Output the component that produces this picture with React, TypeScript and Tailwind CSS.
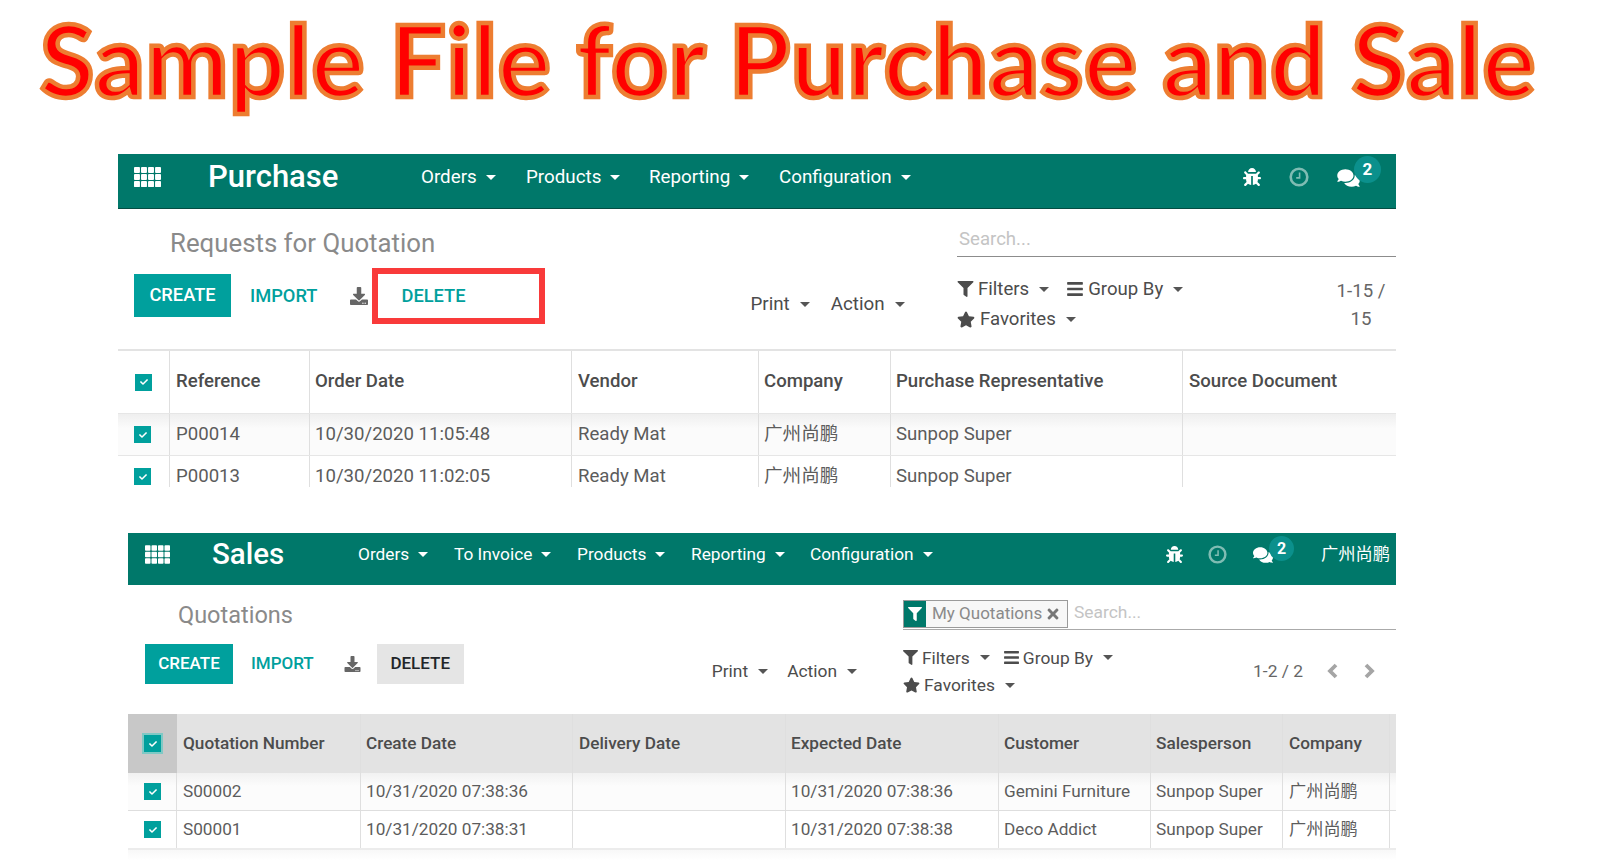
import type { ReactNode } from "react";
import { FaBars, FaBug, FaComments, FaCheck, FaDownload, FaFilter, FaStar, FaTimes } from "react-icons/fa";

const PURCHASE_HEAD = ["Reference", "Order Date", "Vendor", "Company", "Purchase Representative", "Source Document"];
const PURCHASE_ROWS = [
  ["P00014", "10/30/2020 11:05:48", "Ready Mat", "广州尚鹏", "Sunpop Super", ""],
  ["P00013", "10/30/2020 11:02:05", "Ready Mat", "广州尚鹏", "Sunpop Super", ""],
];
const PURCHASE_TIGHT = [1, 3, 4];

const SALES_HEAD = ["Quotation Number", "Create Date", "Delivery Date", "Expected Date", "Customer", "Salesperson", "Company", ""];
const SALES_ROWS = [
  ["S00002", "10/31/2020 07:38:36", "", "10/31/2020 07:38:36", "Gemini Furniture", "Sunpop Super", "广州尚鹏", ""],
  ["S00001", "10/31/2020 07:38:31", "", "10/31/2020 07:38:38", "Deco Addict", "Sunpop Super", "广州尚鹏", ""],
];
const SALES_TIGHT = [1, 3, 4, 5];

function Caret({ className = "" }: { className?: string }) {
  return <span className={`inline-block h-0 w-0 border-x-[5px] border-t-[5px] border-x-transparent border-t-current ${className}`} />;
}

function AppsIcon({ className }: { className: string }) {
  const cells = [];
  for (let r = 0; r < 3; r++) {
    for (let c = 0; c < 4; c++) {
      cells.push(<rect key={`${r}-${c}`} x={c * 6.5} y={r * 6.5} width="5.5" height="5.5" rx="0.8" fill="white" />);
    }
  }
  return <svg viewBox="0 0 25 18.5" className={className}>{cells}</svg>;
}

function ClockIcon({ className }: { className: string }) {
  return (
    <svg viewBox="0 0 20 20" className={className}>
      <circle cx="10" cy="10" r="8.3" fill="none" stroke="#7fbcb3" strokeWidth="2.6" />
      <path d="M10.6 5.5v5.4H7.2" fill="none" stroke="#7fbcb3" strokeWidth="1.6" />
    </svg>
  );
}

function Chevron({ d, className = "" }: { d: string; className?: string }) {
  return (
    <svg viewBox="0 0 12 16" className={`h-[16px] w-[12px] ${className}`}>
      <path d={d} fill="none" stroke="#a5a5a5" strokeWidth="3.8" />
    </svg>
  );
}

function Check({ className = "" }: { className?: string }) {
  return (
    <span className={`flex h-[17px] w-[17px] items-center justify-center bg-[#00a09d] text-white ${className}`}>
      <FaCheck className="h-[8px] w-[8px]" />
    </span>
  );
}

function MenuItem({ label, className }: { label: string; className: string }) {
  return (
    <span className={`flex items-center whitespace-nowrap text-white ${className}`}>
      {label}
      <Caret className="ml-[9px]" />
    </span>
  );
}

function Dropdown({ children, className = "" }: { children: ReactNode; className?: string }) {
  return (
    <span className={`flex items-center whitespace-nowrap font-normal text-[#4c4c4c] ${className}`}>
      {children}
      <Caret className="ml-[10px] text-[#555]" />
    </span>
  );
}

function Cell({ children, tight = false, className = "" }: { children?: ReactNode; tight?: boolean; className?: string }) {
  return (
    <div className={`flex items-center overflow-hidden whitespace-nowrap border-r border-[#dfdfdf] last:border-r-0 ${tight ? "pl-[5px]" : "pl-[6px]"} ${className}`}>
      {children}
    </div>
  );
}

export default function App() {
  return (
    <div className="h-[865px] w-[1600px] overflow-hidden bg-white font-['Roboto','Noto_Sans_CJK_SC',sans-serif]">
      <h1 className="h-[154px] whitespace-nowrap pl-[40px] font-['Lato',sans-serif] text-[99px] font-bold leading-[118px] tracking-[0.75px] text-[#ff0000] [-webkit-text-stroke:4.5px_#ed7d31]">
        Sample File for Purchase and Sale
      </h1>

      {/* purchase screen */}
      <section className="ml-[118px] w-[1278px]">
        <nav className="flex h-[55px] items-center border-b border-[#044d43] bg-[#00786a] pb-[8px] text-[18.8px]">
          <AppsIcon className="ml-[16px] h-[20px] w-[27px]" />
          <span className="ml-[47px] w-[213px] text-[31px] font-medium text-white">Purchase</span>
          <MenuItem label="Orders" className="w-[105px]" />
          <MenuItem label="Products" className="w-[123px]" />
          <MenuItem label="Reporting" className="w-[130px]" />
          <MenuItem label="Configuration" className="w-[464px]" />
          <FaBug className="h-[18px] w-[18px] text-white" />
          <ClockIcon className="ml-[28px] h-[20px] w-[20px]" />
          <span className="relative ml-[28px] mt-[2px]">
            <FaComments className="h-[20px] w-[23px] text-white" />
            <span className="absolute -top-[12px] left-[17px] flex h-[27px] w-[27px] items-center justify-center rounded-full bg-[#0b908c] text-[17px] font-bold text-white">2</span>
          </span>
        </nav>

        <div className="flex h-[140px]">
          <div className="w-[839px]">
            <h2 className="ml-[52px] mt-[16px] h-[36px] text-[25.8px] leading-[36px] text-[#8a8a8a]">Requests for Quotation</h2>
            <div className="ml-[16px] mt-[7px] flex h-[56px] items-center text-[18.3px] font-medium">
              <span className="mb-[2px] flex h-[43px] w-[97px] items-center justify-center bg-[#00a09d] text-white">CREATE</span>
              <span className="ml-[19px] text-[#00a09d]">IMPORT</span>
              <FaDownload className="ml-[33px] h-[18px] w-[18px] text-[#666]" />
              <span className="ml-[4px] flex h-[56px] w-[173px] items-center border-[6px] border-[#f93a3a] pl-[23px] text-[#00a09d]">DELETE</span>
              <Dropdown className="ml-[205px] mt-[16px] text-[18.8px]">Print</Dropdown>
              <Dropdown className="ml-[21px] mt-[16px] text-[18.8px]">Action</Dropdown>
            </div>
          </div>
          <div className="flex-1">
            <div className="flex h-[48px] items-end border-b border-[#8c8c8c] pb-[2px] pl-[2px] text-[18.6px] text-[#c4c4c4]">Search...</div>
            <div className="flex">
              <div className="mt-[17px] text-[18.6px] leading-[30px]">
                <div className="flex h-[30px] items-center">
                  <Dropdown><FaFilter className="mr-[4px] h-[16px] w-[17px]" />Filters</Dropdown>
                  <Dropdown className="ml-[17px]"><FaBars className="mr-[4px] h-[18px] w-[18px]" />Group By</Dropdown>
                </div>
                <div className="flex h-[30px] items-center">
                  <Dropdown><FaStar className="mr-[5px] h-[17px] w-[18px]" />Favorites</Dropdown>
                </div>
              </div>
              <div className="ml-auto mr-[4px] mt-[20px] w-[62px] text-center text-[18.6px] leading-[28px] text-[#666]">1-15 / 15</div>
            </div>
          </div>
        </div>

        <div className="h-[138px] overflow-hidden border-t-2 border-[#e3e3e3] text-[18.6px] text-[#5c5c5c]">
          <div className="grid h-[62px] grid-cols-[52px_140px_262px_187px_132px_292px_213px] font-medium text-[#4c4c4c]">
            <Cell className="pl-[17px]"><Check /></Cell>
            {PURCHASE_HEAD.map((h, j) => <Cell key={h} tight={PURCHASE_TIGHT.includes(j)}>{h}</Cell>)}
          </div>
          {PURCHASE_ROWS.map((row, i) => (
            <div key={row[0]} className={`grid h-[42px] grid-cols-[52px_140px_262px_187px_132px_292px_213px] border-t border-[#e6e6e6] ${i === 0 ? "bg-[linear-gradient(#efefef,#fbfbfb_35%)]" : ""}`}>
              <Cell className="pl-[16px]"><Check /></Cell>
              {row.map((v, j) => <Cell key={j} tight={PURCHASE_TIGHT.includes(j)}>{v}</Cell>)}
            </div>
          ))}
        </div>
      </section>

      {/* sales screen */}
      <section className="ml-[128px] mt-[46px] w-[1268px]">
        <nav className="flex h-[52px] items-center bg-[#00786a] pb-[9px] text-[17.3px]">
          <AppsIcon className="ml-[17px] h-[19px] w-[25px]" />
          <span className="ml-[42px] w-[146px] text-[29.5px] font-medium text-white">Sales</span>
          <MenuItem label="Orders" className="w-[96px]" />
          <MenuItem label="To Invoice" className="w-[123px]" />
          <MenuItem label="Products" className="w-[114px]" />
          <MenuItem label="Reporting" className="w-[119px]" />
          <MenuItem label="Configuration" className="w-[356px]" />
          <FaBug className="h-[17px] w-[17px] text-white" />
          <ClockIcon className="ml-[25px] h-[19px] w-[19px]" />
          <span className="relative ml-[26px] mt-[1px]">
            <FaComments className="h-[18px] w-[20px] text-white" />
            <span className="absolute -top-[10px] left-[16px] flex h-[25px] w-[25px] items-center justify-center rounded-full bg-[#0b908c] text-[16px] font-bold text-white">2</span>
          </span>
          <span className="ml-[48px] text-[17.3px] text-white">广州尚鹏</span>
        </nav>

        <div className="flex h-[129px]">
          <div className="w-[775px]">
            <h2 className="ml-[50px] mt-[12px] h-[36px] text-[23.5px] leading-[36px] text-[#8a8a8a]">Quotations</h2>
            <div className="ml-[17px] mt-[11px] flex h-[40px] items-center text-[17px] font-medium">
              <span className="flex h-[40px] w-[88px] items-center justify-center bg-[#00a09d] text-white">CREATE</span>
              <span className="ml-[18px] text-[#00a09d]">IMPORT</span>
              <FaDownload className="ml-[30px] h-[16px] w-[17px] text-[#666]" />
              <span className="ml-[16px] flex h-[40px] w-[87px] items-center justify-center bg-[#e5e5e5] text-[#212529]">DELETE</span>
              <Dropdown className="ml-[248px] mt-[14px] text-[17.4px]">Print</Dropdown>
              <Dropdown className="ml-[19px] mt-[14px] text-[17.4px]">Action</Dropdown>
            </div>
          </div>
          <div className="flex-1">
            <div className="flex h-[45px] items-end border-b border-[#aaa] text-[17.4px]">
              <div className="mb-[1px] flex h-[28px] w-[165px] items-center border border-[#9a9a9a] bg-[#f7f7f7] text-[#8a8a8a]">
                <span className="flex h-full w-[22px] items-center justify-center bg-[#00786a] text-white"><FaFilter className="h-[14px] w-[14px]" /></span>
                <span className="ml-[6px] whitespace-nowrap text-[17px]">My Quotations</span>
                <FaTimes className="ml-[4px] h-[16px] w-[14px] text-[#777]" />
              </div>
              <span className="mb-[4px] ml-[6px] text-[#c4c4c4]">Search...</span>
            </div>
            <div className="flex">
              <div className="mt-[14px] text-[17.4px]">
                <div className="flex h-[27.5px] items-center">
                  <Dropdown><FaFilter className="mr-[4px] h-[15px] w-[15px]" />Filters</Dropdown>
                  <Dropdown className="ml-[13px]"><FaBars className="mr-[3px] h-[17px] w-[17px]" />Group By</Dropdown>
                </div>
                <div className="flex h-[27.5px] items-center">
                  <Dropdown><FaStar className="mr-[4px] h-[16px] w-[17px]" />Favorites</Dropdown>
                </div>
              </div>
              <div className="ml-auto mr-[20px] mt-[27px] flex h-[28px] items-center text-[17.4px] text-[#666]">
                1-2 / 2
                <Chevron d="M10 2 4 8l6 6" className="ml-[23px]" />
                <Chevron d="M2 2l6 6-6 6" className="ml-[26px]" />
              </div>
            </div>
          </div>
        </div>

        <div className="text-[17.2px] text-[#5c5c5c]">
          <div className="grid h-[59px] grid-cols-[49px_184px_212px_213px_213px_152px_132px_107px_6px] bg-[#e3e3e3] font-medium text-[#4c4c4c]">
            <div className="flex items-center justify-center bg-[#c8c8c8]"><Check className="outline-2 outline-[#7fc9c5]" /></div>
            {SALES_HEAD.map((h, j) => <Cell key={j} tight={SALES_TIGHT.includes(j)} className="border-[#dadada]">{h}</Cell>)}
          </div>
          {SALES_ROWS.map((row, i) => (
            <div key={row[0]} className={`grid grid-cols-[49px_184px_212px_213px_213px_152px_132px_107px_6px] ${i === 0 ? "h-[38px] border-b border-[#dedede] bg-[linear-gradient(#f1f1f1,#fcfcfc_35%)]" : "h-[37px]"}`}>
              <Cell className="pl-[16px]"><Check className="h-[16px] w-[16px]" /></Cell>
              {row.map((v, j) => <Cell key={j} tight={SALES_TIGHT.includes(j)}>{v}</Cell>)}
            </div>
          ))}
          <div className="h-[12px] border-t-2 border-[#ececec] bg-[linear-gradient(#f8f8f8,#ffffff)]" />
        </div>
      </section>
    </div>
  );
}
